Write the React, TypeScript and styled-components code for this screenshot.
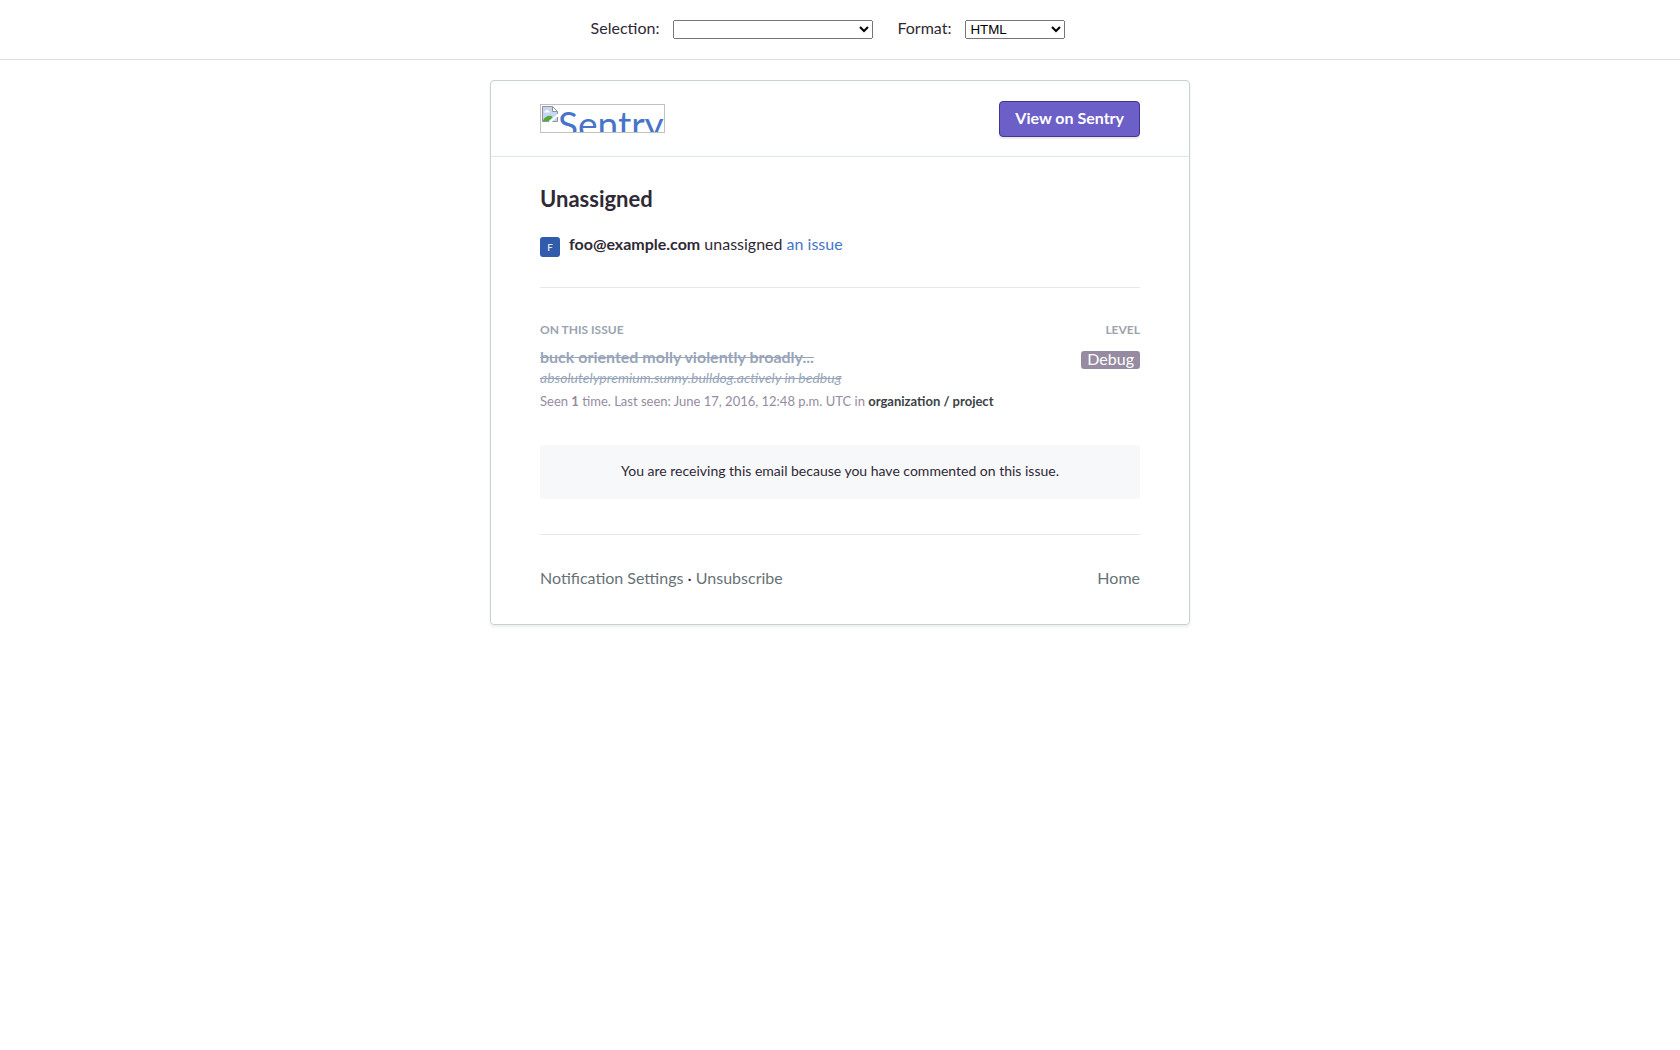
import React from "react";
import styled, { createGlobalStyle } from "styled-components";

const GlobalStyle = createGlobalStyle`
  *, *::before, *::after { box-sizing: border-box; }
  body {
    margin: 0;
    background: #fff;
    color: #2f2936;
    font: 16px/24px Lato, "Liberation Sans", sans-serif;
  }
  a { color: #4674ca; text-decoration: none; }
  h2, h3, p { margin: 0; }
`;

const Toolbar = styled.form`
  display: flex;
  justify-content: center;
  align-items: center;
  padding: 16px 0 17px;
  border-bottom: 1px solid #ddd;
`;

const Field = styled.div`
  display: flex;
  align-items: center;
  gap: 14px;
  margin-right: 24px;

  label { padding-bottom: 2px; }
`;

const Select = styled.select<{ $width: number }>`
  width: ${(p) => p.$width}px;
`;

const Card = styled.main`
  max-width: 700px;
  margin: 20px auto;
  border: 1px solid #c4d1d5;
  border-radius: 4px;
  box-shadow: 0 2px 3px rgba(0, 0, 0, 0.08);
`;

const CardHeader = styled.header`
  display: flex;
  justify-content: space-between;
  align-items: flex-start;
  padding: 20px 49px 19px;
  border-bottom: 1px solid #dee7eb;
`;

const Logo = styled.a`
  display: flex;
  align-items: flex-start;
  width: 125px;
  height: 29px;
  margin-top: 3px;
  padding: 1px;
  border: 1px solid #c0c0c0;
  overflow: hidden;
  font-size: 37px;
  line-height: 36px;

  svg { flex: none; }
`;

const Button = styled.button`
  padding: 4px 15px 6px;
  border: 1px solid #413496;
  border-radius: 4px;
  background: #6c5fc7;
  box-shadow: 0 2px 0 rgba(0, 0, 0, 0.08);
  color: #fff;
  font: bold 16px/24px Lato, "Liberation Sans", sans-serif;
`;

const Section = styled.section`
  margin: 0 49px;
  border-bottom: 1px solid #e7e7e7;
`;

const Summary = styled(Section)`
  padding: 27px 0 30px;
`;

const Title = styled.h2`
  margin-bottom: 19px;
  font-size: 22px;
  line-height: 29px;
`;

const Activity = styled.div`
  display: flex;
  align-items: flex-start;
  gap: 9px;
`;

const Avatar = styled.span`
  width: 20px;
  height: 20px;
  margin-top: 5px;
  border-radius: 3px;
  background: #315cac;
  color: #fff;
  font-size: 10px;
  line-height: 20px;
  text-align: center;
`;

const Issue = styled(Section)`
  padding: 30px 0 35px;
`;

const IssueRow = styled.div`
  display: flex;
  justify-content: space-between;
  align-items: flex-start;
`;

const Label = styled.h3`
  margin-bottom: 5px;
  color: #9ba3ae;
  font-size: 12px;
  line-height: 24px;
  text-transform: uppercase;
`;

const IssueTitle = styled.p`
  color: #98a5b9;
  font-weight: bold;
  line-height: 20px;
  text-decoration: line-through;
`;

const Culprit = styled.p`
  color: #98a5b9;
  font-size: 14px;
  font-style: italic;
  line-height: 22px;
  text-decoration: line-through;
`;

const Meta = styled.p`
  color: #968ba0;
  font-size: 13px;
  line-height: 24px;
`;

const ProjectName = styled.strong`
  color: #3a4245;
`;

const Level = styled.span`
  margin-top: 4px;
  padding: 0 6px 2px;
  border-radius: 3px;
  background: #968ba0;
  color: #fff;
  line-height: 16px;
`;

const Notice = styled.p`
  margin-top: 32px;
  padding: 14px 15px 16px;
  border-radius: 3px;
  background: #f7f8fa;
  font-size: 14px;
  text-align: center;
`;

const CardFooter = styled.footer`
  display: flex;
  justify-content: space-between;
  padding: 31px 49px 34px;

  a { color: #687276; }
`;

const BrokenImage = () => (
  <svg width="16" height="16" viewBox="0 0 16 16" aria-hidden="true">
    <path d="M0.5 0.5H10.5L15.5 5.5V8L7 15.5H0.5Z" fill="#c4d6f4" />
    <path d="M2 6.5Q2 5 3.5 5Q4.5 3 6 4.5Q8 4.5 7.5 6.5Z" fill="#fff" />
    <path d="M1 14.5Q4 9 9.5 10L10.5 11.5L6.5 15H1Z" fill="#53ab36" />
    <path d="M15.5 10.5V15.5H10Z" fill="#c4d6f4" />
    <path d="M10.5 0.5V5.5H15.5Z" fill="#fff" />
    <path d="M15.5 8V5.5L10.5 0.5H0.5V15.5H7M10.5 0.5V5.5H15.5M15.5 11V15.5H10.5" fill="none" stroke="#929292" />
  </svg>
);

export default function App() {
  return (
    <>
      <GlobalStyle />
      <Toolbar>
        <Field>
          <label htmlFor="selection">Selection:</label>
          <Select id="selection" $width={200} defaultValue="">
            <option value="" />
          </Select>
        </Field>
        <Field>
          <label htmlFor="format">Format:</label>
          <Select id="format" $width={100}>
            <option>HTML</option>
          </Select>
        </Field>
      </Toolbar>
      <Card>
        <CardHeader>
          <Logo href="#">
            <BrokenImage />
            Sentry
          </Logo>
          <Button type="button">View on Sentry</Button>
        </CardHeader>
        <Summary>
          <Title>Unassigned</Title>
          <Activity>
            <Avatar>F</Avatar>
            <p>
              <strong>foo@example.com</strong> unassigned <a href="#">an issue</a>
            </p>
          </Activity>
        </Summary>
        <Issue>
          <IssueRow>
            <Label>On this issue</Label>
            <Label>Level</Label>
          </IssueRow>
          <IssueRow>
            <div>
              <IssueTitle>buck oriented molly violently broadly...</IssueTitle>
              <Culprit>absolutelypremium.sunny.bulldog.actively in bedbug</Culprit>
              <Meta>
                Seen <strong>1</strong> time. Last seen: June 17, 2016, 12:48 p.m. UTC in{" "}
                <ProjectName>organization / project</ProjectName>
              </Meta>
            </div>
            <Level>Debug</Level>
          </IssueRow>
          <Notice>You are receiving this email because you have commented on this issue.</Notice>
        </Issue>
        <CardFooter>
          <div>
            <a href="#">Notification Settings</a> · <a href="#">Unsubscribe</a>
          </div>
          <a href="#">Home</a>
        </CardFooter>
      </Card>
    </>
  );
}
